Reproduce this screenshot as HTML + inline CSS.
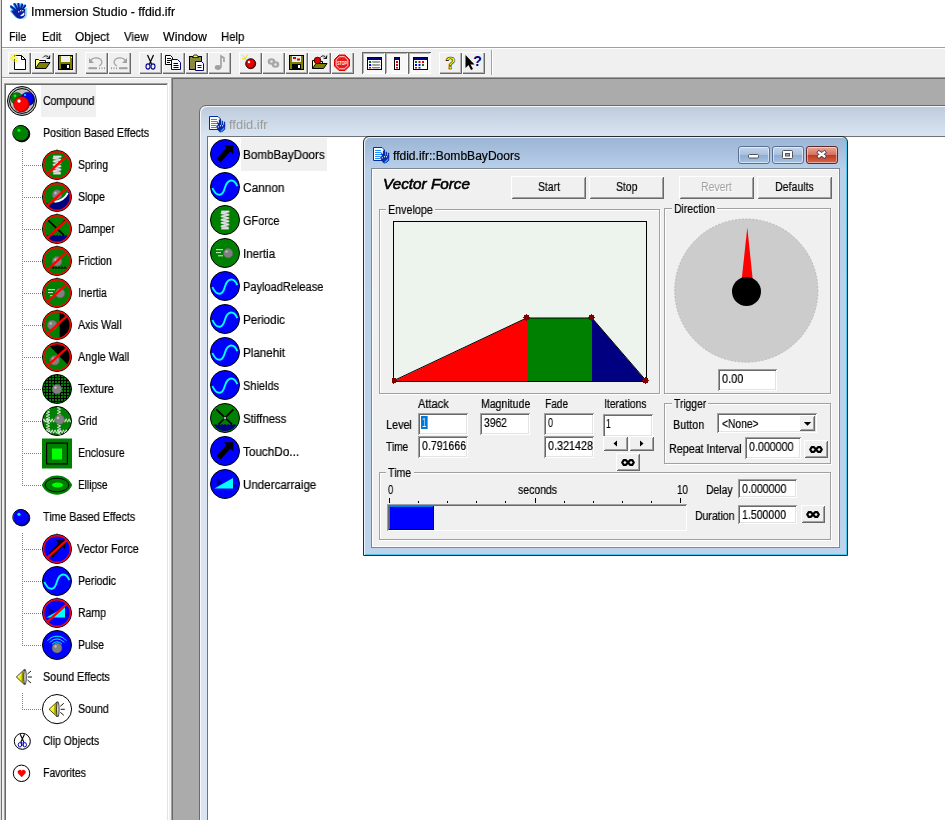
<!DOCTYPE html>
<html><head><meta charset="utf-8"><title>Immersion Studio - ffdid.ifr</title><style>
html,body{margin:0;padding:0;background:#fff;}
body{width:945px;height:820px;position:relative;overflow:hidden;font-family:"Liberation Sans",sans-serif;font-size:12px;}
div,span.t,svg{position:absolute;}
div{box-sizing:border-box;}
.t{white-space:nowrap;transform-origin:0 0;line-height:normal;will-change:transform;}
.btn{background:#f0f0f0;box-shadow:inset 1px 1px #fff,inset -1px -1px #696969,inset 2px 2px #f0f0f0,inset -2px -2px #a0a0a0;}
.tb{background:#f0f0f0;box-shadow:inset 1px 1px #fff,inset -1px -1px #696969,inset -2px -2px #b4b4b4;}
.tbp{background:#f8f8f8;box-shadow:inset 1px 1px #696969,inset -1px -1px #fff,inset 2px 2px #b4b4b4;}
.inp{background:#fff;box-shadow:inset 1px 1px #a0a0a0,inset -1px -1px #fff,inset 2px 2px #696969,inset -2px -2px #e3e3e3;}
.grp{border:1px solid #a0a0a0;box-shadow:1px 1px 0 #fff,inset 1px 1px 0 #fff;}
.gl{background:#f0f0f0;height:14px;}
</style></head><body>
<svg width="0" height="0" style="left:0;top:0"><defs><clipPath id="cc"><circle cx="16" cy="16" r="14"/></clipPath><clipPath id="cc2"><circle cx="16" cy="16" r="13.100"/></clipPath></defs></svg>
<div style="left:0px;top:0px;width:1px;height:820px;background:#dedede"></div>
<div style="left:1px;top:0px;width:1px;height:820px;background:#707070"></div>
<span class="t" style="left:30.80px;top:5px;font-size:12px;color:#000;transform:scaleX(1.0310);-webkit-text-stroke:0.2px #000;">Immersion Studio - ffdid.ifr</span>
<svg style="left:10px;top:3px" width="17" height="17" viewBox="0 0 17 17"><g transform="translate(-0.7,-0.2)"><line x1="1.2" y1="3.6" x2="9" y2="10.5" stroke="#20b4f8" stroke-width="2.6" stroke-linecap="round"/><line x1="4.9" y1="1.2" x2="9" y2="10.5" stroke="#20b4f8" stroke-width="2.6" stroke-linecap="round"/><line x1="8.6" y1="0.8" x2="9" y2="10.5" stroke="#20b4f8" stroke-width="2.6" stroke-linecap="round"/><line x1="12.3" y1="1.6" x2="9" y2="10.5" stroke="#20b4f8" stroke-width="2.6" stroke-linecap="round"/><line x1="15.3" y1="2.8" x2="9" y2="10.5" stroke="#20b4f8" stroke-width="2.6" stroke-linecap="round"/><path d="M2.5 6.5 L0.8 8.5 L3 11 L6 14.5 L9 16 L13 15.5 L15.5 13 L15.8 6z" fill="#20b4f8"/></g><line x1="1.2" y1="3.6" x2="9.5" y2="10.5" stroke="#0a1ea0" stroke-width="1.9" stroke-linecap="round"/><line x1="4.9" y1="1.2" x2="9.5" y2="10.5" stroke="#0a1ea0" stroke-width="1.9" stroke-linecap="round"/><line x1="8.6" y1="0.8" x2="9.5" y2="10.5" stroke="#0a1ea0" stroke-width="1.9" stroke-linecap="round"/><line x1="12.3" y1="1.6" x2="9.5" y2="10.5" stroke="#0a1ea0" stroke-width="1.9" stroke-linecap="round"/><line x1="15.3" y1="2.8" x2="9.5" y2="10.5" stroke="#0a1ea0" stroke-width="1.9" stroke-linecap="round"/><path d="M3.5 7 L1.5 8.6 L4 11.5 L7 14.8 L10 15.8 L12.8 15.2 L15.2 12.6 L15.2 6z" fill="#0a1ea0"/><path d="M16 5 V13.5 L13.5 15.8" fill="none" stroke="#20b4f8" stroke-width="0.9"/><path d="M10 13 L14.3 9.3 V12.2 L11.5 13.2z" fill="#fff"/><rect x="8.1" y="8.2" width="1.2" height="1.2" fill="#fff"/><rect x="10.1" y="7.1" width="1.2" height="1.2" fill="#fff"/><rect x="12.2" y="7.1" width="1.2" height="1.2" fill="#fff"/></svg>
<span class="t" style="left:9.30px;top:30px;font-size:12px;color:#000;transform:scaleX(0.8903);-webkit-text-stroke:0.2px #000;">File</span>
<span class="t" style="left:41.50px;top:30px;font-size:12px;color:#000;transform:scaleX(0.9324);-webkit-text-stroke:0.2px #000;">Edit</span>
<span class="t" style="left:75.40px;top:30px;font-size:12px;color:#000;transform:scaleX(0.9919);-webkit-text-stroke:0.2px #000;">Object</span>
<span class="t" style="left:124.30px;top:30px;font-size:12px;color:#000;transform:scaleX(0.9457);-webkit-text-stroke:0.2px #000;">View</span>
<span class="t" style="left:163.00px;top:30px;font-size:12px;color:#000;transform:scaleX(1.0276);-webkit-text-stroke:0.2px #000;">Window</span>
<span class="t" style="left:221.40px;top:30px;font-size:12px;color:#000;transform:scaleX(0.9448);-webkit-text-stroke:0.2px #000;">Help</span>
<div style="left:2px;top:47px;width:943px;height:31px;background:#f0f0f0;border-top:1px solid #a0a0a0;box-shadow:inset 0 1px #fff;"></div>
<div style="left:2px;top:78px;width:170px;height:742px;background:#f0f0f0;border-top:1px solid #fff"></div>
<div style="left:2px;top:77px;width:943px;height:1px;background:#a0a0a0"></div>
<div class="tb" style="left:8px;top:52px;width:23px;height:22px;"></div>
<div class="tb" style="left:31px;top:52px;width:23px;height:22px;"></div>
<div class="tb" style="left:54px;top:52px;width:23px;height:22px;"></div>
<div class="tb" style="left:85px;top:52px;width:23px;height:22px;"></div>
<div class="tb" style="left:108px;top:52px;width:23px;height:22px;"></div>
<div class="tb" style="left:139px;top:52px;width:23px;height:22px;"></div>
<div class="tb" style="left:162px;top:52px;width:23px;height:22px;"></div>
<div class="tb" style="left:185px;top:52px;width:23px;height:22px;"></div>
<div class="tb" style="left:208px;top:52px;width:23px;height:22px;"></div>
<div class="tb" style="left:239px;top:52px;width:23px;height:22px;"></div>
<div class="tb" style="left:262px;top:52px;width:23px;height:22px;"></div>
<div class="tb" style="left:285px;top:52px;width:23px;height:22px;"></div>
<div class="tb" style="left:308px;top:52px;width:23px;height:22px;"></div>
<div class="tb" style="left:331px;top:52px;width:23px;height:22px;"></div>
<div class="tbp" style="left:362px;top:52px;width:23px;height:22px;"></div>
<div class="tbp" style="left:385px;top:52px;width:23px;height:22px;"></div>
<div class="tbp" style="left:408px;top:52px;width:23px;height:22px;"></div>
<div class="tb" style="left:439px;top:52px;width:23px;height:22px;"></div>
<div class="tb" style="left:462px;top:52px;width:23px;height:22px;"></div>
<div style="left:491px;top:50px;width:1px;height:25px;background:#a0a0a0"></div>
<div style="left:492px;top:50px;width:1px;height:25px;background:#fff"></div>
<svg style="left:8px;top:52px" width="23" height="22" viewBox="0 0 23 22"><path d="M6.5 3.5 H13.5 L17.5 7.5 V17.5 H6.5z" fill="#fff" stroke="#000" stroke-width="1"/><path d="M13.5 3.5 V7.5 H17.5" fill="none" stroke="#000" stroke-width="1"/><path d="M3 3 L9 9 M8.500 2.500 L3.500 9 M6 2 V10 M2 6 H10" stroke="#f0f000" stroke-width="1"/><rect x="5.200" y="5.200" width="1.600" height="1.600" fill="#fff"/></svg>
<svg style="left:31px;top:52px" width="23" height="22" viewBox="0 0 23 22"><path d="M4.500 16.5 V7.5 H7.5 L8.5 8.5 H14.5 V10.5" fill="#ffff80" stroke="#000" stroke-width="1"/><path d="M4.5 16.5 L8.5 10.5 H19 L15 16.5z" fill="#808000" stroke="#000" stroke-width="1"/><path d="M12 5.5 C14 3 17 3.5 18.5 6.5 M18.5 6.5 L18.8 3.5 M18.5 6.5 L15.5 6.2" fill="none" stroke="#000" stroke-width="1"/></svg>
<svg style="left:54px;top:52px" width="23" height="22" viewBox="0 0 23 22"><rect x="4.500" y="3.5" width="14" height="14" fill="#808000" stroke="#000" stroke-width="1"/><rect x="7" y="4" width="9" height="6" fill="#f0f0f0"/><rect x="7" y="12" width="9" height="5" fill="#000"/><rect x="13" y="13" width="2" height="3" fill="#fff"/><rect x="17" y="5" width="1" height="1" fill="#fff"/></svg>
<svg style="left:85px;top:52px" width="23" height="22" viewBox="0 0 23 22"><path d="M5 9.500 C7 5 14 4.500 16.500 8.500 C17.500 11 16 13 14 14" fill="none" stroke="#a0a0a0" stroke-width="1.2"/><path d="M4 6 V11 H9z" fill="#a0a0a0"/><path d="M3.500 16.200 H12" stroke="#a0a0a0" stroke-width="2"/><path d="M14 16.200 H15 M16.500 16.200 H17.500 M19 16.200 H20" stroke="#a0a0a0" stroke-width="2"/></svg>
<svg style="left:108px;top:52px" width="23" height="22" viewBox="0 0 23 22"><path d="M18 9.500 C16 5 9 4.500 6.500 8.500 C5.500 11 7 13 9 14" fill="none" stroke="#a0a0a0" stroke-width="1.2"/><path d="M19 6 V11 H14z" fill="#a0a0a0"/><path d="M11 16.200 H19.500" stroke="#a0a0a0" stroke-width="2"/><path d="M3 16.200 H4 M5.500 16.200 H6.500 M8 16.200 H9" stroke="#a0a0a0" stroke-width="2"/></svg>
<svg style="left:139px;top:52px" width="23" height="22" viewBox="0 0 23 22"><path d="M8.5 3 L12.500 12 M14.500 3 L10.500 12" stroke="#000" stroke-width="1.2" fill="none"/><ellipse cx="9" cy="14.500" rx="2" ry="2.600" fill="none" stroke="#000090" stroke-width="1.1"/><ellipse cx="14" cy="14.500" rx="2" ry="2.600" fill="none" stroke="#000090" stroke-width="1.1"/></svg>
<svg style="left:162px;top:52px" width="23" height="22" viewBox="0 0 23 22"><path d="M3.500 3.500 H8.500 L10.500 5.500 V12.500 H3.500z" fill="#fff" stroke="#000" stroke-width="1"/><path d="M5 6.500H9M5 8.500H9M5 10.500H8" stroke="#000" stroke-width="1"/><path d="M9.500 7.500 H15.500 L18.500 10.500 V17.500 H9.500z" fill="#fff" stroke="#000080" stroke-width="1"/><path d="M11.500 11.500H16M11.500 13.500H16.5M11.500 15.500H16.5" stroke="#000" stroke-width="1"/></svg>
<svg style="left:185px;top:52px" width="23" height="22" viewBox="0 0 23 22"><rect x="4.500" y="4.500" width="12" height="13" fill="#8a8a40" stroke="#000" stroke-width="1"/><path d="M7.500 5.500 L9 3 H12 L13.500 5.500z" fill="#ffff60" stroke="#000" stroke-width="0.8"/><path d="M10.500 9.500 H16.500 L18.500 11.500 V18.500 H10.500z" fill="#fff" stroke="#000080" stroke-width="1"/><path d="M12.500 13.500H16.500M12.500 15.500H16.5" stroke="#000080" stroke-width="1"/></svg>
<svg style="left:208px;top:52px" width="23" height="22" viewBox="0 0 23 22"><ellipse cx="10" cy="15.500" rx="3.200" ry="2.400" fill="#a0a0a0"/><path d="M13 15.500 V4 L16 6 V10" fill="none" stroke="#a0a0a0" stroke-width="1.6"/></svg>
<svg style="left:239px;top:52px" width="23" height="22" viewBox="0 0 23 22"><circle cx="11.700" cy="11.700" r="5" fill="#e80000" stroke="#000" stroke-width="0.900"/><path d="M15.800 9.500 A5 5 0 0 1 9 16 A6.500 6.500 0 0 0 15.800 9.500z" fill="#900000"/><circle cx="10" cy="10" r="1.200" fill="#fff"/><path d="M3 3 L8 8 M8.500 2.500 L6 7 M3 6.500 L7.500 7.500" stroke="#e8e800" stroke-width="1"/></svg>
<svg style="left:262px;top:52px" width="23" height="22" viewBox="0 0 23 22"><ellipse cx="9.500" cy="9.500" rx="3.800" ry="3.200" fill="#a8a8a8"/><ellipse cx="13.500" cy="12.500" rx="3.800" ry="3.200" fill="#a8a8a8"/><circle cx="9.500" cy="9.500" r="1.200" fill="#e8e8e8"/><circle cx="13.500" cy="12.500" r="1.200" fill="#e8e8e8"/></svg>
<svg style="left:285px;top:52px" width="23" height="22" viewBox="0 0 23 22"><rect x="4.500" y="3.500" width="14" height="14" fill="#808000" stroke="#000" stroke-width="1"/><rect x="7" y="4" width="9" height="6" fill="#f0f0f0"/><rect x="8" y="5" width="3" height="2" fill="#e00000"/><rect x="12" y="6.500" width="3" height="2" fill="#e00000"/><rect x="7" y="12" width="9" height="5" fill="#000"/><rect x="13" y="13" width="2" height="3" fill="#fff"/></svg>
<svg style="left:308px;top:52px" width="23" height="22" viewBox="0 0 23 22"><path d="M4.500 16.500 V8.500 H8 L9 9.500 H14.500 V11" fill="#ffff80" stroke="#000" stroke-width="1"/><path d="M4.500 16.500 L8 11.500 H19 L15.500 16.500z" fill="#808000" stroke="#000" stroke-width="1"/><circle cx="9.500" cy="8.500" r="3.300" fill="#e00000" stroke="#000" stroke-width="0.8"/><path d="M12.500 5.500 C14 3 17 3.500 18.500 6.500 M18.500 6.500 L18.800 3.500 M18.500 6.500 L15.500 6.200" fill="none" stroke="#000" stroke-width="1"/></svg>
<svg style="left:331px;top:52px" width="23" height="22" viewBox="0 0 23 22"><path d="M8 3 H14 L18.500 7.500 V14 L14 18.500 H8 L3.500 14 V7.500z" fill="#f01818" stroke="#e00000" stroke-width="1"/><path d="M8.500 4.700 H13.500 L16.800 8 V13.500 L13.500 16.800 H8.500 L5.200 13.500 V8z" fill="none" stroke="#fff" stroke-width="0.800"/><text x="11" y="12.800" font-family="Liberation Sans, sans-serif" font-size="5.500" font-weight="bold" fill="#fff" text-anchor="middle" textLength="9.500" lengthAdjust="spacingAndGlyphs">STOP</text></svg>
<svg style="left:362px;top:52px" width="23" height="22" viewBox="0 0 23 22"><g transform="translate(1,1)"><rect x="4.500" y="4.500" width="14" height="12" fill="#fff" stroke="#000" stroke-width="1"/><rect x="5" y="5" width="13" height="2" fill="#000080"/><rect x="6" y="8" width="2" height="2" fill="#008000"/><rect x="6" y="11" width="2" height="2" fill="#0000ff"/><rect x="6" y="14" width="2" height="1.500" fill="#e00000"/><path d="M9 9.500 l1 -1 l1 1 l1 -1 l1 1 l1 -1 l1 1 l1 -1 l1 1 M9 12.500 l1 -1 l1 1 l1 -1 l1 1 l1 -1 l1 1 l1 -1 l1 1 M9 15.300 l1 -1 l1 1 l1 -1 l1 1 l1 -1 l1 1 l1 -1 l1 1" fill="none" stroke="#000" stroke-width="0.800"/></g></svg>
<svg style="left:385px;top:52px" width="23" height="22" viewBox="0 0 23 22"><g transform="translate(1,1)"><rect x="8.500" y="4.500" width="5" height="12" fill="#fff" stroke="#000" stroke-width="1"/><rect x="9" y="5" width="4" height="2" fill="#000080"/><rect x="10" y="8" width="2" height="2" fill="#e00000"/><rect x="10" y="11" width="2" height="2" fill="#e00000"/><rect x="10" y="14" width="2" height="1.500" fill="#e00000"/></g></svg>
<svg style="left:408px;top:52px" width="23" height="22" viewBox="0 0 23 22"><g transform="translate(1,1)"><rect x="4.500" y="4.500" width="14" height="12" fill="#fff" stroke="#000" stroke-width="1"/><rect x="5" y="5" width="13" height="2" fill="#000080"/><rect x="6" y="8" width="2" height="2" fill="#008000"/><rect x="9.500" y="8" width="2" height="2" fill="#e00000"/><rect x="13" y="8" width="2" height="2" fill="#e00000"/><rect x="6" y="11" width="2" height="2" fill="#0000ff"/><rect x="9.500" y="11" width="2" height="2" fill="#0000ff"/><rect x="13" y="11" width="2" height="2" fill="#008000"/><rect x="6" y="14" width="2" height="1.500" fill="#e00000"/><rect x="9.500" y="14" width="2" height="1.500" fill="#0000ff"/></g></svg>
<svg style="left:439px;top:52px" width="23" height="22" viewBox="0 0 23 22"><text x="11.500" y="17" font-family="Liberation Sans, sans-serif" font-size="17" font-weight="bold" fill="#ffff00" stroke="#000" stroke-width="0.550" text-anchor="middle">?</text></svg>
<svg style="left:462px;top:52px" width="23" height="22" viewBox="0 0 23 22"><path d="M3.500 3 V16 L6.500 13 L9 18 L11 17 L8.500 12.500 H12.500z" fill="#000"/><text x="15.500" y="14" font-family="Liberation Sans, sans-serif" font-size="14" font-weight="bold" fill="#000080" text-anchor="middle">?</text></svg>
<div style="left:4px;top:83px;width:164px;height:737px;background:#fff;border-left:1px solid #a0a0a0;border-top:1px solid #a0a0a0;border-right:1px solid #e3e3e3;box-shadow:inset 1px 1px #696969;"></div>
<div style="left:41px;top:85px;width:55px;height:32px;background:#f0f0f0"></div>
<div style="left:22px;top:149px;width:1px;height:337px;background:repeating-linear-gradient(to bottom,#808080 0 1px,transparent 1px 2px)"></div>
<div style="left:24px;top:165px;width:18px;height:1px;background:repeating-linear-gradient(to right,#808080 0 1px,transparent 1px 2px)"></div>
<div style="left:24px;top:197px;width:18px;height:1px;background:repeating-linear-gradient(to right,#808080 0 1px,transparent 1px 2px)"></div>
<div style="left:24px;top:229px;width:18px;height:1px;background:repeating-linear-gradient(to right,#808080 0 1px,transparent 1px 2px)"></div>
<div style="left:24px;top:261px;width:18px;height:1px;background:repeating-linear-gradient(to right,#808080 0 1px,transparent 1px 2px)"></div>
<div style="left:24px;top:293px;width:18px;height:1px;background:repeating-linear-gradient(to right,#808080 0 1px,transparent 1px 2px)"></div>
<div style="left:24px;top:325px;width:18px;height:1px;background:repeating-linear-gradient(to right,#808080 0 1px,transparent 1px 2px)"></div>
<div style="left:24px;top:357px;width:18px;height:1px;background:repeating-linear-gradient(to right,#808080 0 1px,transparent 1px 2px)"></div>
<div style="left:24px;top:389px;width:18px;height:1px;background:repeating-linear-gradient(to right,#808080 0 1px,transparent 1px 2px)"></div>
<div style="left:24px;top:421px;width:18px;height:1px;background:repeating-linear-gradient(to right,#808080 0 1px,transparent 1px 2px)"></div>
<div style="left:24px;top:453px;width:18px;height:1px;background:repeating-linear-gradient(to right,#808080 0 1px,transparent 1px 2px)"></div>
<div style="left:24px;top:485px;width:18px;height:1px;background:repeating-linear-gradient(to right,#808080 0 1px,transparent 1px 2px)"></div>
<div style="left:22px;top:533px;width:1px;height:113px;background:repeating-linear-gradient(to bottom,#808080 0 1px,transparent 1px 2px)"></div>
<div style="left:24px;top:549px;width:18px;height:1px;background:repeating-linear-gradient(to right,#808080 0 1px,transparent 1px 2px)"></div>
<div style="left:24px;top:581px;width:18px;height:1px;background:repeating-linear-gradient(to right,#808080 0 1px,transparent 1px 2px)"></div>
<div style="left:24px;top:613px;width:18px;height:1px;background:repeating-linear-gradient(to right,#808080 0 1px,transparent 1px 2px)"></div>
<div style="left:24px;top:645px;width:18px;height:1px;background:repeating-linear-gradient(to right,#808080 0 1px,transparent 1px 2px)"></div>
<div style="left:22px;top:693px;width:1px;height:17px;background:repeating-linear-gradient(to bottom,#808080 0 1px,transparent 1px 2px)"></div>
<div style="left:24px;top:709px;width:18px;height:1px;background:repeating-linear-gradient(to right,#808080 0 1px,transparent 1px 2px)"></div>
<svg style="left:6px;top:85px" width="32" height="32" viewBox="0 0 32 32" ><circle cx="16" cy="16" r="14.5" fill="#c0c0c0" stroke="#000" stroke-width="1"/><circle cx="16" cy="16" r="12.4" fill="none" stroke="#000" stroke-width="1"/><circle cx="10.8" cy="13.6" r="6" fill="#008000" stroke="#003000" stroke-width="0.5"/><circle cx="9" cy="10.8" r="1.4" fill="#00ff00"/><circle cx="21.6" cy="14" r="6.8" fill="#0000ff" stroke="#000060" stroke-width="0.5"/><path d="M26 9 A6.8 6.8 0 0 1 23 20.6 A10 10 0 0 0 26 9z" fill="#000090"/><circle cx="19" cy="10" r="1" fill="#00ffff"/><circle cx="15.4" cy="19.2" r="7.8" fill="#ff0000" stroke="#600000" stroke-width="0.5"/><path d="M22 15 A7.8 7.8 0 0 1 13 26.6 A9 9 0 0 0 22 15z" fill="#b00000"/><circle cx="13" cy="16" r="1.7" fill="#fff"/></svg>
<span class="t" style="left:42.80px;top:94px;font-size:12.5px;color:#000;transform:scaleX(0.8393);-webkit-text-stroke:0.22px #000;">Compound</span>
<svg style="left:6px;top:117px" width="32" height="32" viewBox="0 0 32 32" ><circle cx="15.900" cy="17" r="7.900" fill="#000" stroke="#000" stroke-width="0.900"/><circle cx="14.900" cy="16" r="7.600" fill="#008000"/><path d="M21.800 12.800 A7.900 7.900 0 1 0 11.600 23.600" fill="none" stroke="#000" stroke-width="1"/><circle cx="12.900" cy="13.200" r="1.500" fill="#00ff00"/></svg>
<span class="t" style="left:42.60px;top:126px;font-size:12.5px;color:#000;transform:scaleX(0.8505);-webkit-text-stroke:0.22px #000;">Position Based Effects</span>
<svg style="left:41px;top:148.5px" width="32" height="32" viewBox="0 0 32 32" ><circle cx="16" cy="16" r="14.5" fill="#008000" stroke="#000" stroke-width="1"/><path d="M12.300 7.600H19.700L12.5 9.2L19.5 10.8L12.5 12.4L19.5 14.1L12.5 15.7L19.5 17.3L12.5 18.9L19.5 20.5L12.5 22.2L19.5 23.8M12.300 24.600H19.700" fill="none" stroke="#c0c0c0" stroke-width="2" stroke-linejoin="round"/><path d="M12.300 7.600H19.700L12.5 9.2L19.5 10.8L12.5 12.4L19.5 14.1L12.5 15.7L19.5 17.3L12.5 18.9L19.5 20.5L12.5 22.2L19.5 23.8M12.300 24.600H19.700" fill="none" stroke="#f4f4f4" stroke-width="0.600" stroke-linejoin="round"/><circle cx="16" cy="16" r="13.300" fill="none" stroke="#f00" stroke-width="1.450"/><line x1="6.2" y1="24.8" x2="25.8" y2="7.2" stroke="#f00" stroke-width="2.3"/><path d="M15 1.5L16 0L17 1.5z" fill="#f00"/></svg>
<span class="t" style="left:77.90px;top:158px;font-size:12.5px;color:#000;transform:scaleX(0.8304);-webkit-text-stroke:0.22px #000;">Spring</span>
<svg style="left:41px;top:180.5px" width="32" height="32" viewBox="0 0 32 32" ><circle cx="16" cy="16" r="14.5" fill="#008000" stroke="#000" stroke-width="1"/><g clip-path="url(#cc)"><path d="M0 23.500 L5.500 22.600 C14 21.600 22.500 20 27.500 11 L32 10 V32 H0z" fill="#000080"/></g><path d="M13.500 20.800 C19.500 20.300 24 17.500 26.800 12" fill="none" stroke="#fff" stroke-width="1.800"/><circle cx="16" cy="13.6" r="4.8" fill="#808080" stroke="#606060" stroke-width="0.6"/><circle cx="14.5" cy="12.0" r="1.2" fill="#c0c0c0"/><circle cx="16" cy="16" r="13.300" fill="none" stroke="#f00" stroke-width="1.450"/><line x1="6.2" y1="24.8" x2="25.8" y2="7.2" stroke="#f00" stroke-width="2.3"/><path d="M15 1.5L16 0L17 1.5z" fill="#f00"/></svg>
<span class="t" style="left:77.90px;top:190px;font-size:12.5px;color:#000;transform:scaleX(0.8438);-webkit-text-stroke:0.22px #000;">Slope</span>
<svg style="left:41px;top:212.5px" width="32" height="32" viewBox="0 0 32 32" ><circle cx="16" cy="16" r="14.5" fill="#008000" stroke="#000" stroke-width="1"/><g clip-path="url(#cc2)"><path d="M0 22.800 L6 22.800 L7 22 L8.500 22.900 L10 22 L11.500 22.900 L13 22 L14.500 22.900 L16 22 L17.500 22.900 L19 22 L20.500 22.900 L22 22 L23.500 22.900 L25 22 L26 22.800 L32 22.800 V32 H0z" fill="#000080"/></g><path d="M7.300 7.400L23.100 22.300M24.400 7.400L9.500 22.300" stroke="#000" stroke-width="1.700" fill="none"/><rect x="14.400" y="14.600" width="3" height="3" fill="#b0b0b0" stroke="#000" stroke-width="0.600"/><circle cx="16" cy="16" r="13.300" fill="none" stroke="#f00" stroke-width="1.450"/><line x1="6.2" y1="24.8" x2="25.8" y2="7.2" stroke="#f00" stroke-width="2.3"/><path d="M15 1.5L16 0L17 1.5z" fill="#f00"/></svg>
<span class="t" style="left:77.90px;top:222px;font-size:12.5px;color:#000;transform:scaleX(0.8236);-webkit-text-stroke:0.22px #000;">Damper</span>
<svg style="left:41px;top:244.5px" width="32" height="32" viewBox="0 0 32 32" ><circle cx="16" cy="16" r="14.5" fill="#008000" stroke="#000" stroke-width="1"/><circle cx="16" cy="16.4" r="4.9" fill="#808080" stroke="#606060" stroke-width="0.6"/><circle cx="14.5" cy="14.799999999999999" r="1.2" fill="#c0c0c0"/><path d="M10.500 23.600 L12 21.300 L13.500 23 L15 21.300 L16.500 23 L18 21.300 L19.500 23 L21 21.300 L22.500 23 L24 21.300 L26 23.600z" fill="#000"/><circle cx="16" cy="16" r="13.300" fill="none" stroke="#f00" stroke-width="1.450"/><line x1="6.2" y1="24.8" x2="25.8" y2="7.2" stroke="#f00" stroke-width="2.3"/><path d="M15 1.5L16 0L17 1.5z" fill="#f00"/></svg>
<span class="t" style="left:77.90px;top:254px;font-size:12.5px;color:#000;transform:scaleX(0.8244);-webkit-text-stroke:0.22px #000;">Friction</span>
<svg style="left:41px;top:276.5px" width="32" height="32" viewBox="0 0 32 32" ><circle cx="16" cy="16" r="14.5" fill="#008000" stroke="#000" stroke-width="1"/><circle cx="19.1" cy="16.2" r="4.7" fill="#808080" stroke="#606060" stroke-width="0.6"/><circle cx="17.6" cy="14.6" r="1.2" fill="#c0c0c0"/><path d="M7 12.700H14M7 15.600H12M9 18.800H14" stroke="#d8ecd8" stroke-width="1"/><circle cx="16" cy="16" r="13.300" fill="none" stroke="#f00" stroke-width="1.450"/><line x1="6.2" y1="24.8" x2="25.8" y2="7.2" stroke="#f00" stroke-width="2.3"/><path d="M15 1.5L16 0L17 1.5z" fill="#f00"/></svg>
<span class="t" style="left:77.90px;top:286px;font-size:12.5px;color:#000;transform:scaleX(0.8302);-webkit-text-stroke:0.22px #000;">Inertia</span>
<svg style="left:41px;top:308.5px" width="32" height="32" viewBox="0 0 32 32" ><circle cx="16" cy="16" r="14.5" fill="#008000" stroke="#000" stroke-width="1"/><path d="M18.600 2.300 A14 14 0 0 1 18.600 29.700z" fill="#000"/><circle cx="11.2" cy="16" r="4.8" fill="#808080" stroke="#606060" stroke-width="0.6"/><circle cx="9.7" cy="14.4" r="1.2" fill="#c0c0c0"/><circle cx="16" cy="16" r="13.300" fill="none" stroke="#f00" stroke-width="1.450"/><line x1="6.2" y1="24.8" x2="25.8" y2="7.2" stroke="#f00" stroke-width="2.3"/><path d="M15 1.5L16 0L17 1.5z" fill="#f00"/></svg>
<span class="t" style="left:77.50px;top:318px;font-size:12.5px;color:#000;transform:scaleX(0.8540);-webkit-text-stroke:0.22px #000;">Axis Wall</span>
<svg style="left:41px;top:340.5px" width="32" height="32" viewBox="0 0 32 32" ><circle cx="16" cy="16" r="14.5" fill="#008000" stroke="#000" stroke-width="1"/><g clip-path="url(#cc)"><path d="M4.500 0.600 L32 29.300 V0z" fill="#000"/></g><circle cx="13.7" cy="19.3" r="4.8" fill="#808080" stroke="#606060" stroke-width="0.6"/><circle cx="12.2" cy="17.7" r="1.2" fill="#c0c0c0"/><circle cx="16" cy="16" r="13.300" fill="none" stroke="#f00" stroke-width="1.450"/><line x1="6.2" y1="24.8" x2="25.8" y2="7.2" stroke="#f00" stroke-width="2.3"/><path d="M15 1.5L16 0L17 1.5z" fill="#f00"/></svg>
<span class="t" style="left:77.50px;top:350px;font-size:12.5px;color:#000;transform:scaleX(0.8649);-webkit-text-stroke:0.22px #000;">Angle Wall</span>
<svg style="left:41px;top:372.5px" width="32" height="32" viewBox="0 0 32 32" ><circle cx="16" cy="16" r="14.5" fill="#008000" stroke="#000" stroke-width="1"/><g clip-path="url(#cc)" stroke="#000" stroke-width="1" shape-rendering="crispEdges"><path d="M1.5 0V32M0 1.5H32"/><path d="M4.5 0V32M0 4.5H32"/><path d="M7.5 0V32M0 7.5H32"/><path d="M10.5 0V32M0 10.5H32"/><path d="M13.5 0V32M0 13.5H32"/><path d="M16.5 0V32M0 16.5H32"/><path d="M19.5 0V32M0 19.5H32"/><path d="M22.5 0V32M0 22.5H32"/><path d="M25.5 0V32M0 25.5H32"/><path d="M28.5 0V32M0 28.5H32"/></g><circle cx="16" cy="16.2" r="4.8" fill="#808080" stroke="#606060" stroke-width="0.6"/><circle cx="14.5" cy="14.6" r="1.2" fill="#c0c0c0"/></svg>
<span class="t" style="left:77.70px;top:382px;font-size:12.5px;color:#000;transform:scaleX(0.8732);-webkit-text-stroke:0.22px #000;">Texture</span>
<svg style="left:41px;top:404.5px" width="32" height="32" viewBox="0 0 32 32" ><circle cx="16" cy="16" r="14.5" fill="#008000" stroke="#000" stroke-width="1"/><g clip-path="url(#cc)" stroke="#e8e8e8" stroke-width="0.900" fill="none"><path d="M0 15.5L1.4 17.2L2.8 13.8L4.2 17.2L5.6 13.8L7.0 17.2L8.4 13.8L9.8 17.2L11.2 13.8L12.6 17.2L14.0 13.8L15.4 17.2L16.8 13.8L18.2 17.2L19.6 13.8L21.0 17.2L22.4 13.8L23.8 17.2L25.2 13.8L26.6 17.2L28.0 13.8L29.4 17.2L30.8 13.8L32.2 17.2"/><path d="M0 26.5L1.4 28.2L2.8 24.8L4.2 28.2L5.6 24.8L7.0 28.2L8.4 24.8L9.8 28.2L11.2 24.8L12.6 28.2L14.0 24.8L15.4 28.2L16.8 24.8L18.2 28.2L19.6 24.8L21.0 28.2L22.4 24.8L23.8 28.2L25.2 24.8L26.6 28.2L28.0 24.8L29.4 28.2L30.8 24.8L32.2 28.2"/><path d="M7 0L8.7 1.4L5.3 2.8L8.7 4.2L5.3 5.6L8.7 7.0L5.3 8.4L8.7 9.8L5.3 11.2L8.7 12.6L5.3 14.0L8.7 15.4L5.3 16.8L8.7 18.2L5.3 19.6L8.7 21.0L5.3 22.4L8.7 23.8L5.3 25.2L8.7 26.6L5.3 28.0L8.7 29.4L5.3 30.8L8.7 32.2"/><path d="M18 0L19.7 1.4L16.3 2.8L19.7 4.2L16.3 5.6L19.7 7.0L16.3 8.4L19.7 9.8L16.3 11.2L19.7 12.6L16.3 14.0L19.7 15.4L16.3 16.8L19.7 18.2L16.3 19.6L19.7 21.0L16.3 22.4L19.7 23.8L16.3 25.2L19.7 26.6L16.3 28.0L19.7 29.4L16.3 30.8L19.7 32.2"/></g><circle cx="18.6" cy="14.6" r="4.8" fill="#808080" stroke="#606060" stroke-width="0.6"/><circle cx="17.1" cy="13.0" r="1.2" fill="#c0c0c0"/></svg>
<span class="t" style="left:77.90px;top:414px;font-size:12.5px;color:#000;transform:scaleX(0.8127);-webkit-text-stroke:0.22px #000;">Grid</span>
<svg style="left:41px;top:436.5px" width="32" height="32" viewBox="0 0 32 32" ><rect x="1" y="1.500" width="30" height="30" fill="#008000"/><rect x="5.600" y="6.100" width="20.800" height="20.800" fill="none" stroke="#000" stroke-width="1.200"/><rect x="11" y="11.500" width="10" height="11" fill="#00ff00"/></svg>
<span class="t" style="left:77.90px;top:446px;font-size:12.5px;color:#000;transform:scaleX(0.8387);-webkit-text-stroke:0.22px #000;">Enclosure</span>
<svg style="left:41px;top:468.5px" width="32" height="32" viewBox="0 0 32 32" ><path d="M0.800 16.100 C6 3.200 26 3.200 31.200 16.100 C26 29 6 29 0.800 16.100z" fill="#008000"/><ellipse cx="16" cy="16" rx="11.800" ry="6.800" fill="none" stroke="#000" stroke-width="1"/><ellipse cx="16.500" cy="16" rx="5.500" ry="2.500" fill="#00ff00"/></svg>
<span class="t" style="left:77.90px;top:478px;font-size:12.5px;color:#000;transform:scaleX(0.8041);-webkit-text-stroke:0.22px #000;">Ellipse</span>
<svg style="left:6px;top:501px" width="32" height="32" viewBox="0 0 32 32" ><circle cx="15.900" cy="17" r="7.900" fill="#000090" stroke="#000" stroke-width="0.900"/><circle cx="14.900" cy="16" r="7.600" fill="#0000ff"/><path d="M21.800 12.800 A7.900 7.900 0 1 0 11.600 23.600" fill="none" stroke="#000" stroke-width="1"/><circle cx="12.900" cy="13.200" r="1.500" fill="#00ffff"/></svg>
<span class="t" style="left:42.80px;top:510px;font-size:12.5px;color:#000;transform:scaleX(0.8553);-webkit-text-stroke:0.22px #000;">Time Based Effects</span>
<svg style="left:41px;top:532.5px" width="32" height="32" viewBox="0 0 32 32" ><circle cx="16" cy="16" r="14.5" fill="#0000ff" stroke="#000" stroke-width="1"/><path d="M14.800 7.200 H24.300 V16.200 L21.450 13.550 L11.550 24.550 L7.650 20.650 L17.550 9.650z" fill="#000"/><circle cx="16" cy="16" r="13.300" fill="none" stroke="#f00" stroke-width="1.450"/><line x1="6.2" y1="24.8" x2="25.8" y2="7.2" stroke="#f00" stroke-width="2.3"/><path d="M15 1.5L16 0L17 1.5z" fill="#f00"/></svg>
<span class="t" style="left:77.40px;top:542px;font-size:12.5px;color:#000;transform:scaleX(0.8691);-webkit-text-stroke:0.22px #000;">Vector Force</span>
<svg style="left:41px;top:564.5px" width="32" height="32" viewBox="0 0 32 32" ><circle cx="16" cy="16" r="14.5" fill="#0000ff" stroke="#000" stroke-width="1"/><path d="M3.400 17 C5.500 22 8.500 24 11 23.800 C14 23.500 15 20 16 16.500 C17 13 18.500 9.800 22 9.500 C25 9.300 27 12 28.300 15.100" fill="none" stroke="#00ffff" stroke-width="1.900"/></svg>
<span class="t" style="left:77.90px;top:574px;font-size:12.5px;color:#000;transform:scaleX(0.8387);-webkit-text-stroke:0.22px #000;">Periodic</span>
<svg style="left:41px;top:596.5px" width="32" height="32" viewBox="0 0 32 32" ><circle cx="16" cy="16" r="14.5" fill="#0000ff" stroke="#000" stroke-width="1"/><path d="M7.800 10.500 L13.800 14.500 L7.800 18z" fill="#000080"/><path d="M5.300 20.500 L24 9.900 L24 20.500z" fill="#00ffff"/><path d="M24 14.500 L26.800 18 L24 20.500z" fill="#000080"/><circle cx="16" cy="16" r="13.300" fill="none" stroke="#f00" stroke-width="1.450"/><line x1="6.2" y1="24.8" x2="25.8" y2="7.2" stroke="#f00" stroke-width="2.3"/><path d="M15 1.5L16 0L17 1.5z" fill="#f00"/></svg>
<span class="t" style="left:77.90px;top:606px;font-size:12.5px;color:#000;transform:scaleX(0.8360);-webkit-text-stroke:0.22px #000;">Ramp</span>
<svg style="left:41px;top:628.5px" width="32" height="32" viewBox="0 0 32 32" ><circle cx="16" cy="16" r="14.5" fill="#0000ff" stroke="#000" stroke-width="1"/><circle cx="16" cy="19" r="4.9" fill="#808080" stroke="#606060" stroke-width="0.6"/><circle cx="14.5" cy="17.4" r="1.2" fill="#c0c0c0"/><path d="M11.1 15.2 A6.2 6.2 0 0 1 20.9 15.2M8.9 13.5 A9 9 0 0 1 23.1 13.5M6.7 11.7 A11.8 11.8 0 0 1 25.3 11.7" fill="none" stroke="#00ffff" stroke-width="1"/></svg>
<span class="t" style="left:77.90px;top:638px;font-size:12.5px;color:#000;transform:scaleX(0.8320);-webkit-text-stroke:0.22px #000;">Pulse</span>
<svg style="left:6px;top:661px" width="32" height="32" viewBox="0 0 32 32" ><g transform="translate(10,8)"><path d="M0.300 8 L8.300 0.500 V15.500z" fill="#f4f000" stroke="#000" stroke-width="0.700"/><path d="M2 8 L7.500 3" stroke="#fff" stroke-width="0.800"/><path d="M6.300 2.800V13.200" stroke="#909000" stroke-width="1.400"/><ellipse cx="9" cy="8" rx="1.300" ry="7.600" fill="#d8d8d8" stroke="#000" stroke-width="0.700"/><path d="M11.800 8H16M11.500 5L15 2M11.500 11L15 14" stroke="#000" stroke-width="0.900"/></g></svg>
<span class="t" style="left:42.80px;top:670px;font-size:12.5px;color:#000;transform:scaleX(0.8618);-webkit-text-stroke:0.22px #000;">Sound Effects</span>
<svg style="left:41px;top:692.5px" width="32" height="32" viewBox="0 0 32 32" ><circle cx="16" cy="16.100" r="14.600" fill="#fff" stroke="#000" stroke-width="1"/><g transform="translate(7.8,8.3)"><path d="M0.300 8 L8.300 0.500 V15.500z" fill="#f4f000" stroke="#000" stroke-width="0.700"/><path d="M2 8 L7.500 3" stroke="#fff" stroke-width="0.800"/><path d="M6.300 2.800V13.200" stroke="#909000" stroke-width="1.400"/><ellipse cx="9" cy="8" rx="1.300" ry="7.600" fill="#d8d8d8" stroke="#000" stroke-width="0.700"/><path d="M11.800 8H16M11.500 5L15 2M11.500 11L15 14" stroke="#000" stroke-width="0.900"/></g></svg>
<span class="t" style="left:77.90px;top:702px;font-size:12.5px;color:#000;transform:scaleX(0.8471);-webkit-text-stroke:0.22px #000;">Sound</span>
<svg style="left:6px;top:725px" width="32" height="32" viewBox="0 0 32 32" ><circle cx="16.700" cy="16.700" r="8" fill="#a8a8a8"/><circle cx="16.300" cy="16.300" r="8" fill="#fff" stroke="#000" stroke-width="1"/><path d="M14.200 9.200L18 17.500M18.500 9.200L14.700 17.500" stroke="#000" stroke-width="1.100" fill="none"/><ellipse cx="13.900" cy="19.800" rx="1.700" ry="2.200" fill="none" stroke="#0000c0" stroke-width="1"/><ellipse cx="18.800" cy="19.800" rx="1.700" ry="2.200" fill="none" stroke="#0000c0" stroke-width="1"/><path d="M15.600 17V21M17.100 17V21" stroke="#0000c0" stroke-width="0.900"/></svg>
<span class="t" style="left:42.80px;top:734px;font-size:12.5px;color:#000;transform:scaleX(0.8312);-webkit-text-stroke:0.22px #000;">Clip Objects</span>
<svg style="left:6px;top:757px" width="32" height="32" viewBox="0 0 32 32" ><circle cx="16" cy="16.800" r="8.200" fill="#a8a8a8"/><circle cx="15.500" cy="16.300" r="8.200" fill="#fff" stroke="#000" stroke-width="1"/><path d="M15.700 20.300 L11.900 16.200 A2.150 2.150 0 0 1 15.700 14 A2.150 2.150 0 0 1 19.500 16.200z" fill="#f00"/></svg>
<span class="t" style="left:42.80px;top:766px;font-size:12.5px;color:#000;transform:scaleX(0.8331);-webkit-text-stroke:0.22px #000;">Favorites</span>
<div style="left:168px;top:83px;width:1px;height:737px;background:#fff"></div>
<div style="left:171px;top:78px;width:1px;height:742px;background:#a0a0a0"></div>
<div style="left:172px;top:78px;width:773px;height:742px;background:#ababab;border-left:1px solid #696969;border-top:1px solid #696969;"></div>
<div style="left:199px;top:105px;width:760px;height:730px;background:linear-gradient(to bottom,#bccbdd 0px,#dae5f1 31px,#dae5f1 100%);border:1px solid #6b6b6b;border-radius:7px 0 0 0;box-shadow:inset 1px 1px #f4f8fc;"></div>
<svg style="left:209px;top:116px" width="17" height="17" viewBox="0 0 17 17"><path d="M0.5 0.5 H9 L11.5 3 V13.5 H0.5z" fill="#fff" stroke="#0030a0" stroke-width="1"/><path d="M2 3.5H8M2 5.5H8.5M2 7.5H8M2 9.5H7.5M2 11.5H7" stroke="#2090ff" stroke-width="1"/><path d="M10.5 3.5V10M13.3 4.8V10M15.5 5.800V10M8.200 6.500L10.500 9.500" stroke="#0a2aa8" stroke-width="1.3" fill="none"/><path d="M8.800 8.800 L16.200 8.500 V13.200 L13.200 16 L11 16.500 L9 14.200 L7 10.800z" fill="#0a2aa8"/><path d="M11 15.200 L15.300 11 V13 L12.500 15.800z" fill="#30a0ff"/><rect x="10.900" y="9.200" width="1.100" height="1.100" fill="#fff"/><rect x="13" y="9.200" width="1.100" height="1.100" fill="#fff"/><rect x="8.800" y="10.300" width="1.100" height="1.100" fill="#fff"/></svg>
<span class="t" style="left:229.30px;top:118px;font-size:12px;color:#9a9a9a;transform:scaleX(1.0776);">ffdid.ifr</span>
<div style="left:207px;top:136px;width:745px;height:700px;background:#fff;border:1px solid #707478;"></div>
<div style="left:241px;top:138px;width:86px;height:33px;background:#f0f0f0"></div>
<svg style="left:209px;top:138px" width="32" height="32" viewBox="0 0 32 32" ><circle cx="16" cy="16" r="14.5" fill="#0000ff" stroke="#000" stroke-width="1"/><path d="M14.800 7.200 H24.300 V16.200 L21.450 13.550 L11.550 24.550 L7.650 20.650 L17.550 9.650z" fill="#000"/></svg>
<span class="t" style="left:242.70px;top:148px;font-size:12px;color:#000;transform:scaleX(0.9731);-webkit-text-stroke:0.2px #000;">BombBayDoors</span>
<svg style="left:209px;top:171px" width="32" height="32" viewBox="0 0 32 32" ><circle cx="16" cy="16" r="14.5" fill="#0000ff" stroke="#000" stroke-width="1"/><path d="M3.400 17 C5.500 22 8.500 24 11 23.800 C14 23.500 15 20 16 16.500 C17 13 18.500 9.800 22 9.500 C25 9.300 27 12 28.300 15.100" fill="none" stroke="#00ffff" stroke-width="1.900"/></svg>
<span class="t" style="left:242.70px;top:181px;font-size:12px;color:#000;transform:scaleX(0.9867);-webkit-text-stroke:0.2px #000;">Cannon</span>
<svg style="left:209px;top:204px" width="32" height="32" viewBox="0 0 32 32" ><circle cx="16" cy="16" r="14.5" fill="#008000" stroke="#000" stroke-width="1"/><path d="M12.300 7.600H19.700L12.5 9.2L19.5 10.8L12.5 12.4L19.5 14.1L12.5 15.7L19.5 17.3L12.5 18.9L19.5 20.5L12.5 22.2L19.5 23.8M12.300 24.600H19.700" fill="none" stroke="#c0c0c0" stroke-width="2" stroke-linejoin="round"/><path d="M12.300 7.600H19.700L12.5 9.2L19.5 10.8L12.5 12.4L19.5 14.1L12.5 15.7L19.5 17.3L12.5 18.9L19.5 20.5L12.5 22.2L19.5 23.8M12.300 24.600H19.700" fill="none" stroke="#f4f4f4" stroke-width="0.600" stroke-linejoin="round"/></svg>
<span class="t" style="left:242.70px;top:214px;font-size:12px;color:#000;transform:scaleX(0.9120);-webkit-text-stroke:0.2px #000;">GForce</span>
<svg style="left:209px;top:237px" width="32" height="32" viewBox="0 0 32 32" ><circle cx="16" cy="16" r="14.5" fill="#008000" stroke="#000" stroke-width="1"/><circle cx="19.1" cy="16.2" r="4.7" fill="#808080" stroke="#606060" stroke-width="0.6"/><circle cx="17.6" cy="14.6" r="1.2" fill="#c0c0c0"/><path d="M7 12.700H14M7 15.600H12M9 18.800H14" stroke="#d8ecd8" stroke-width="1"/></svg>
<span class="t" style="left:242.70px;top:247px;font-size:12px;color:#000;transform:scaleX(0.9605);-webkit-text-stroke:0.2px #000;">Inertia</span>
<svg style="left:209px;top:270px" width="32" height="32" viewBox="0 0 32 32" ><circle cx="16" cy="16" r="14.5" fill="#0000ff" stroke="#000" stroke-width="1"/><path d="M3.400 17 C5.500 22 8.500 24 11 23.800 C14 23.500 15 20 16 16.500 C17 13 18.500 9.800 22 9.500 C25 9.300 27 12 28.300 15.100" fill="none" stroke="#00ffff" stroke-width="1.900"/></svg>
<span class="t" style="left:242.70px;top:280px;font-size:12px;color:#000;transform:scaleX(0.9197);-webkit-text-stroke:0.2px #000;">PayloadRelease</span>
<svg style="left:209px;top:303px" width="32" height="32" viewBox="0 0 32 32" ><circle cx="16" cy="16" r="14.5" fill="#0000ff" stroke="#000" stroke-width="1"/><path d="M3.400 17 C5.500 22 8.500 24 11 23.800 C14 23.500 15 20 16 16.500 C17 13 18.500 9.800 22 9.500 C25 9.300 27 12 28.300 15.100" fill="none" stroke="#00ffff" stroke-width="1.900"/></svg>
<span class="t" style="left:242.70px;top:313px;font-size:12px;color:#000;transform:scaleX(0.9682);-webkit-text-stroke:0.2px #000;">Periodic</span>
<svg style="left:209px;top:336px" width="32" height="32" viewBox="0 0 32 32" ><circle cx="16" cy="16" r="14.5" fill="#0000ff" stroke="#000" stroke-width="1"/><path d="M3.400 17 C5.500 22 8.500 24 11 23.800 C14 23.500 15 20 16 16.500 C17 13 18.500 9.800 22 9.500 C25 9.300 27 12 28.300 15.100" fill="none" stroke="#00ffff" stroke-width="1.900"/></svg>
<span class="t" style="left:242.70px;top:346px;font-size:12px;color:#000;transform:scaleX(0.9682);-webkit-text-stroke:0.2px #000;">Planehit</span>
<svg style="left:209px;top:369px" width="32" height="32" viewBox="0 0 32 32" ><circle cx="16" cy="16" r="14.5" fill="#0000ff" stroke="#000" stroke-width="1"/><path d="M3.400 17 C5.500 22 8.500 24 11 23.800 C14 23.500 15 20 16 16.500 C17 13 18.500 9.800 22 9.500 C25 9.300 27 12 28.300 15.100" fill="none" stroke="#00ffff" stroke-width="1.900"/></svg>
<span class="t" style="left:242.70px;top:379px;font-size:12px;color:#000;transform:scaleX(0.9172);-webkit-text-stroke:0.2px #000;">Shields</span>
<svg style="left:209px;top:402px" width="32" height="32" viewBox="0 0 32 32" ><circle cx="16" cy="16" r="14.5" fill="#008000" stroke="#000" stroke-width="1"/><g clip-path="url(#cc2)"><path d="M0 22.800 L6 22.800 L7 22 L8.500 22.900 L10 22 L11.500 22.900 L13 22 L14.500 22.900 L16 22 L17.500 22.900 L19 22 L20.500 22.900 L22 22 L23.500 22.900 L25 22 L26 22.800 L32 22.800 V32 H0z" fill="#000080"/></g><path d="M7.300 7.400L23.100 22.300M24.400 7.400L9.500 22.300" stroke="#000" stroke-width="1.700" fill="none"/><rect x="14.400" y="14.600" width="3" height="3" fill="#b0b0b0" stroke="#000" stroke-width="0.600"/></svg>
<span class="t" style="left:242.70px;top:412px;font-size:12px;color:#000;transform:scaleX(0.9458);-webkit-text-stroke:0.2px #000;">Stiffness</span>
<svg style="left:209px;top:435px" width="32" height="32" viewBox="0 0 32 32" ><circle cx="16" cy="16" r="14.5" fill="#0000ff" stroke="#000" stroke-width="1"/><path d="M14.800 7.200 H24.300 V16.200 L21.450 13.550 L11.550 24.550 L7.650 20.650 L17.550 9.650z" fill="#000"/></svg>
<span class="t" style="left:242.70px;top:445px;font-size:12px;color:#000;transform:scaleX(0.9780);-webkit-text-stroke:0.2px #000;">TouchDo...</span>
<svg style="left:209px;top:468px" width="32" height="32" viewBox="0 0 32 32" ><circle cx="16" cy="16" r="14.5" fill="#0000ff" stroke="#000" stroke-width="1"/><path d="M7.800 10.500 L13.800 14.500 L7.800 18z" fill="#000080"/><path d="M5.300 20.500 L24 9.900 L24 20.500z" fill="#00ffff"/><path d="M24 14.500 L26.800 18 L24 20.500z" fill="#000080"/></svg>
<span class="t" style="left:242.70px;top:478px;font-size:12px;color:#000;transform:scaleX(0.9642);-webkit-text-stroke:0.2px #000;">Undercarraige</span>
<div style="left:363px;top:136px;width:485px;height:420px;background:linear-gradient(to bottom,#9ab4d3 0px,#b9d0e9 32px,#bdd3ec 100%);border:1px solid #2b2b2b;border-radius:6px 6px 0 0;box-shadow:inset 1px 1px #eaf1fa,inset -1px -1px #50c8f0;"></div>
<svg style="left:373px;top:147px" width="17" height="17" viewBox="0 0 17 17"><path d="M0.5 0.5 H9 L11.5 3 V13.5 H0.5z" fill="#fff" stroke="#0030a0" stroke-width="1"/><path d="M2 3.5H8M2 5.5H8.5M2 7.5H8M2 9.5H7.5M2 11.5H7" stroke="#2090ff" stroke-width="1"/><path d="M10.5 3.5V10M13.3 4.8V10M15.5 5.800V10M8.200 6.500L10.500 9.500" stroke="#0a2aa8" stroke-width="1.3" fill="none"/><path d="M8.800 8.800 L16.200 8.500 V13.200 L13.200 16 L11 16.500 L9 14.200 L7 10.800z" fill="#0a2aa8"/><path d="M11 15.200 L15.300 11 V13 L12.500 15.800z" fill="#30a0ff"/><rect x="10.900" y="9.200" width="1.100" height="1.100" fill="#fff"/><rect x="13" y="9.200" width="1.100" height="1.100" fill="#fff"/><rect x="8.800" y="10.300" width="1.100" height="1.100" fill="#fff"/></svg>
<span class="t" style="left:393.00px;top:149px;font-size:12px;color:#000;transform:scaleX(1.0041);-webkit-text-stroke:0.2px #000;">ffdid.ifr::BombBayDoors</span>
<div style="left:738px;top:146px;width:32px;height:18px;background:linear-gradient(to bottom,#c4d6ec 0%,#a9c0de 48%,#8fadd2 52%,#a6c2e4 100%);border:1px solid #5a6f92;border-radius:3px;box-shadow:inset 0 0 0 1px rgba(255,255,255,0.55);"></div>
<div style="left:772px;top:146px;width:32px;height:18px;background:linear-gradient(to bottom,#c4d6ec 0%,#a9c0de 48%,#8fadd2 52%,#a6c2e4 100%);border:1px solid #5a6f92;border-radius:3px;box-shadow:inset 0 0 0 1px rgba(255,255,255,0.55);"></div>
<div style="left:806px;top:146px;width:32px;height:18px;background:linear-gradient(to bottom,#e9a99b 0%,#d8705c 48%,#c13a22 52%,#d4674f 100%);border:1px solid #5b2a2a;border-radius:3px;box-shadow:inset 0 0 0 1px rgba(255,255,255,0.45);"></div>
<svg style="left:738px;top:146px" width="100" height="18" viewBox="0 0 100 18"><rect x="10.5" y="8.5" width="10" height="3.5" rx="1" fill="#fff" stroke="#555" stroke-width="1"/><rect x="44.5" y="4.5" width="10" height="8" rx="1" fill="#fff" stroke="#555" stroke-width="1"/><rect x="47.5" y="7.5" width="4" height="2.5" fill="#8fadd2" stroke="#555" stroke-width="1"/><path d="M81 6.400 L86.300 10.300 M86.300 6.400 L81 10.300" stroke="#4a3848" stroke-width="3.800" stroke-linecap="square"/><path d="M81 6.400 L86.300 10.300 M86.300 6.400 L81 10.300" stroke="#fff" stroke-width="2.300" stroke-linecap="square"/></svg>
<div style="left:371px;top:168px;width:469px;height:380px;background:#f0f0f0;border:1px solid #7d8794;box-shadow:inset 1px 1px #fff,inset -1px -1px #fff;"></div>
<span class="t" style="left:383.00px;top:176px;font-size:14px;color:#000;font-style:italic;transform:scaleX(1.0931);-webkit-text-stroke:0.55px #000;">Vector Force</span>
<div class="btn" style="left:511px;top:176px;width:75px;height:23px;"></div>
<span class="t" style="left:537.50px;top:180px;font-size:12.5px;color:#000;transform:scaleX(0.8303);-webkit-text-stroke:0.2px #000;">Start</span>
<div class="btn" style="left:589px;top:176px;width:75px;height:23px;"></div>
<span class="t" style="left:615.60px;top:180px;font-size:12.5px;color:#000;transform:scaleX(0.8331);-webkit-text-stroke:0.2px #000;">Stop</span>
<div class="btn" style="left:679px;top:176px;width:75px;height:23px;"></div>
<span class="t" style="left:701.60px;top:181px;font-size:12.5px;color:#fff;transform:scaleX(0.8394);">Revert</span>
<span class="t" style="left:700.60px;top:180px;font-size:12.5px;color:#a0a0a0;transform:scaleX(0.8394);">Revert</span>
<div class="btn" style="left:757px;top:176px;width:75px;height:23px;"></div>
<span class="t" style="left:775.40px;top:180px;font-size:12.5px;color:#000;transform:scaleX(0.8458);-webkit-text-stroke:0.2px #000;">Defaults</span>
<div class="grp" style="left:379px;top:209px;width:281px;height:185px;"></div>
<div style="left:386.3px;top:203px;width:48.69999999999999px;height:14px;background:#f0f0f0"></div>
<span class="t" style="left:388.30px;top:203px;font-size:12.5px;color:#000;transform:scaleX(0.8576);-webkit-text-stroke:0.2px #000;">Envelope</span>
<div class="grp" style="left:664px;top:208px;width:167px;height:186px;"></div>
<div style="left:672px;top:202px;width:45px;height:14px;background:#f0f0f0"></div>
<span class="t" style="left:674.00px;top:202px;font-size:12.5px;color:#000;transform:scaleX(0.8314);-webkit-text-stroke:0.2px #000;">Direction</span>
<div class="grp" style="left:664px;top:403px;width:167px;height:61px;"></div>
<div style="left:671.8px;top:397px;width:36.200000000000045px;height:14px;background:#f0f0f0"></div>
<span class="t" style="left:673.80px;top:397px;font-size:12.5px;color:#000;transform:scaleX(0.8230);-webkit-text-stroke:0.2px #000;">Trigger</span>
<div class="grp" style="left:379px;top:472px;width:452px;height:68px;"></div>
<div style="left:386.4px;top:466px;width:27.200000000000045px;height:14px;background:#f0f0f0"></div>
<span class="t" style="left:388.40px;top:466px;font-size:12.5px;color:#000;transform:scaleX(0.8494);-webkit-text-stroke:0.2px #000;">Time</span>
<svg style="left:392px;top:220px" width="257" height="164" viewBox="392 220 257 164"><rect x="393.5" y="221.5" width="253" height="160" fill="#edf4ed" stroke="#000" stroke-width="1"/><path d="M394 381 L527 318 L527 381z" fill="#ff0000"/><rect x="527" y="318" width="65" height="63" fill="#008000"/><path d="M592 318 L646 381 L592 381z" fill="#000080"/><path d="M394 380.5 L526.5 318 L592 318 L646 380.5" fill="none" stroke="#000" stroke-width="1"/><rect x="391" y="378" width="5" height="5" fill="#800000"/><path d="M390 380.5H397M393.5 377V384" stroke="#800000" stroke-width="1"/><rect x="524" y="315" width="5" height="5" fill="#800000"/><path d="M523 317.5H530M526.5 314V321" stroke="#800000" stroke-width="1"/><rect x="589" y="315" width="5" height="5" fill="#800000"/><path d="M588 317.5H595M591.5 314V321" stroke="#800000" stroke-width="1"/><rect x="643" y="378" width="5" height="5" fill="#800000"/><path d="M642 380.5H649M645.5 377V384" stroke="#800000" stroke-width="1"/></svg>
<svg style="left:670px;top:215px" width="154" height="152" viewBox="670 215 154 152"><circle cx="746.3" cy="290.6" r="71.6" fill="#cccccc" stroke="#b0b0b0" stroke-width="0.8" stroke-dasharray="2 1.5"/><path d="M747.3 227.5 L753.2 284 L741.2 284z" fill="#ff0000"/><circle cx="746.5" cy="291.4" r="14.5" fill="#000"/></svg>
<div class="inp" style="left:718px;top:369px;width:59px;height:22px;"></div>
<span class="t" style="left:721.50px;top:372px;font-size:12.5px;color:#000;transform:scaleX(0.8720);-webkit-text-stroke:0.2px #000;">0.00</span>
<span class="t" style="left:418.20px;top:397px;font-size:12.5px;color:#000;transform:scaleX(0.8847);-webkit-text-stroke:0.22px #000;">Attack</span>
<span class="t" style="left:480.80px;top:397px;font-size:12.5px;color:#000;transform:scaleX(0.8428);-webkit-text-stroke:0.22px #000;">Magnitude</span>
<span class="t" style="left:544.70px;top:397px;font-size:12.5px;color:#000;transform:scaleX(0.8105);-webkit-text-stroke:0.22px #000;">Fade</span>
<span class="t" style="left:603.50px;top:397px;font-size:12.5px;color:#000;transform:scaleX(0.8262);-webkit-text-stroke:0.22px #000;">Iterations</span>
<span class="t" style="left:385.70px;top:418px;font-size:12.5px;color:#000;transform:scaleX(0.8669);-webkit-text-stroke:0.22px #000;">Level</span>
<span class="t" style="left:386.00px;top:440px;font-size:12.5px;color:#000;transform:scaleX(0.8165);-webkit-text-stroke:0.22px #000;">Time</span>
<div class="inp" style="left:418px;top:413px;width:50px;height:22px;"></div>
<div style="left:421px;top:416px;width:6px;height:13px;background:#0078d7"></div>
<span class="t" style="left:421.60px;top:416px;font-size:12.5px;color:#fff;transform:scaleX(0.6054);">1</span>
<div style="left:427px;top:416px;width:1px;height:13px;background:#f08020"></div>
<div class="inp" style="left:418px;top:436px;width:50px;height:22px;"></div>
<span class="t" style="left:422.00px;top:439px;font-size:12.5px;color:#000;transform:scaleX(0.8441);-webkit-text-stroke:0.2px #000;">0.791666</span>
<div class="inp" style="left:480px;top:413px;width:50px;height:22px;"></div>
<span class="t" style="left:484.00px;top:416px;font-size:12.5px;color:#000;transform:scaleX(0.8270);-webkit-text-stroke:0.2px #000;">3962</span>
<div class="inp" style="left:544px;top:413px;width:50px;height:22px;"></div>
<span class="t" style="left:548.00px;top:416px;font-size:12.5px;color:#000;transform:scaleX(0.7207);-webkit-text-stroke:0.2px #000;">0</span>
<div class="inp" style="left:544px;top:436px;width:50px;height:22px;"></div>
<span class="t" style="left:547.60px;top:439px;font-size:12.5px;color:#000;transform:scaleX(0.8614);-webkit-text-stroke:0.2px #000;">0.321428</span>
<div class="inp" style="left:603px;top:414px;width:50px;height:23px;"></div>
<span class="t" style="left:606.20px;top:417px;font-size:12.5px;color:#000;transform:scaleX(0.6631);-webkit-text-stroke:0.2px #000;">1</span>
<div class="btn" style="left:603px;top:436px;width:25px;height:15px;"></div>
<div class="btn" style="left:629px;top:436px;width:25px;height:15px;"></div>
<svg style="left:603px;top:436px" width="51" height="15" viewBox="0 0 51 15"><path d="M10.5 7.5 L14 4.5 V10.5z M40.5 7.5 L37 4.5 V10.5z" fill="#000"/></svg>
<div class="btn" style="left:616px;top:453px;width:24px;height:18px;"></div>
<svg style="left:621px;top:459px" width="14" height="7" viewBox="0 0 14 7"><path d="M7 3.5 L5 1.2 H2.7 L1.2 3.5 L2.7 5.8 H5 L7 3.5 L9 1.2 H11.3 L12.8 3.5 L11.3 5.8 H9z" fill="none" stroke="#000" stroke-width="2.2" stroke-linejoin="round"/></svg>
<span class="t" style="left:673.30px;top:418px;font-size:12.5px;color:#000;transform:scaleX(0.8637);-webkit-text-stroke:0.22px #000;">Button</span>
<span class="t" style="left:669.40px;top:442px;font-size:12.5px;color:#000;transform:scaleX(0.8566);-webkit-text-stroke:0.22px #000;">Repeat Interval</span>
<div class="inp" style="left:717px;top:413px;width:100px;height:20px;"></div>
<span class="t" style="left:721.70px;top:417px;font-size:12.5px;color:#000;transform:scaleX(0.8225);-webkit-text-stroke:0.2px #000;">&lt;None&gt;</span>
<div class="btn" style="left:799px;top:415px;width:16px;height:16px;"></div>
<svg style="left:799px;top:415px" width="16" height="16" viewBox="0 0 16 16"><path d="M4.800 7 H12.200 L8.500 10.800z" fill="#000"/></svg>
<div class="inp" style="left:745px;top:437px;width:56px;height:22px;"></div>
<span class="t" style="left:748.70px;top:440px;font-size:12.5px;color:#000;transform:scaleX(0.8537);-webkit-text-stroke:0.2px #000;">0.000000</span>
<div class="btn" style="left:804px;top:440px;width:24px;height:18px;"></div>
<svg style="left:809px;top:446px" width="14" height="7" viewBox="0 0 14 7"><path d="M7 3.5 L5 1.2 H2.7 L1.2 3.5 L2.7 5.8 H5 L7 3.5 L9 1.2 H11.3 L12.8 3.5 L11.3 5.8 H9z" fill="none" stroke="#000" stroke-width="2.2" stroke-linejoin="round"/></svg>
<span class="t" style="left:387.80px;top:483px;font-size:12.5px;color:#000;transform:scaleX(0.7495);-webkit-text-stroke:0.22px #000;">0</span>
<span class="t" style="left:517.80px;top:483px;font-size:12.5px;color:#000;transform:scaleX(0.8376);-webkit-text-stroke:0.22px #000;">seconds</span>
<span class="t" style="left:676.50px;top:483px;font-size:12.5px;color:#000;transform:scaleX(0.7856);-webkit-text-stroke:0.22px #000;">10</span>
<span class="t" style="left:705.70px;top:483px;font-size:12.5px;color:#000;transform:scaleX(0.8297);-webkit-text-stroke:0.22px #000;">Delay</span>
<span class="t" style="left:695.40px;top:509px;font-size:12.5px;color:#000;transform:scaleX(0.8360);-webkit-text-stroke:0.22px #000;">Duration</span>
<div class="inp" style="left:738px;top:479px;width:59px;height:19px;"></div>
<span class="t" style="left:741.60px;top:482px;font-size:12.5px;color:#000;transform:scaleX(0.8518);-webkit-text-stroke:0.2px #000;">0.000000</span>
<div class="inp" style="left:738px;top:505px;width:59px;height:19px;"></div>
<span class="t" style="left:742.00px;top:508px;font-size:12.5px;color:#000;transform:scaleX(0.8441);-webkit-text-stroke:0.2px #000;">1.500000</span>
<div class="btn" style="left:801px;top:505px;width:24px;height:18px;"></div>
<svg style="left:806px;top:511px" width="14" height="7" viewBox="0 0 14 7"><path d="M7 3.5 L5 1.2 H2.7 L1.2 3.5 L2.7 5.8 H5 L7 3.5 L9 1.2 H11.3 L12.8 3.5 L11.3 5.8 H9z" fill="none" stroke="#000" stroke-width="2.2" stroke-linejoin="round"/></svg>
<div style="left:387px;top:504px;width:300px;height:27px;background:#f0f0f0;box-shadow:inset 1px 1px #a0a0a0,inset -1px -1px #fff,inset 2px 2px #696969;"></div>
<div style="left:389px;top:498px;width:1px;height:5px;background:#000"></div>
<div style="left:418px;top:501px;width:1px;height:2px;background:#000"></div>
<div style="left:447px;top:501px;width:1px;height:2px;background:#000"></div>
<div style="left:476px;top:501px;width:1px;height:2px;background:#000"></div>
<div style="left:505px;top:501px;width:1px;height:2px;background:#000"></div>
<div style="left:535px;top:498px;width:1px;height:5px;background:#000"></div>
<div style="left:564px;top:501px;width:1px;height:2px;background:#000"></div>
<div style="left:593px;top:501px;width:1px;height:2px;background:#000"></div>
<div style="left:622px;top:501px;width:1px;height:2px;background:#000"></div>
<div style="left:651px;top:501px;width:1px;height:2px;background:#000"></div>
<div style="left:680px;top:498px;width:1px;height:5px;background:#000"></div>
<div style="left:389px;top:506px;width:45px;height:24px;background:#0000ff;border-right:1px solid #000;border-bottom:1px solid #000;box-shadow:inset 1px 1px #0078f0;"></div>
</body></html>
